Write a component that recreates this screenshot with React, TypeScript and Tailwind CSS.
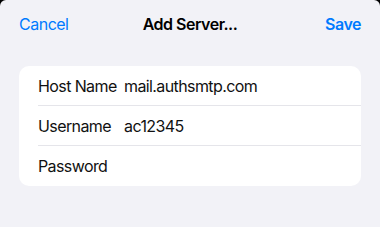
export default function App() {
    const rows = [
        { label: "Host Name", value: "mail.authsmtp.com" },
        { label: "Username", value: "ac12345" },
        { label: "Password", value: "" },
    ];

    return (
        <div className="w-[380px] h-[227px] bg-black font-['Inter',sans-serif]">
            <div className="h-full rounded-t-[6px] bg-[#f2f2f7] px-[19px]">
                <div className="grid grid-cols-[1fr_auto_1fr] items-center h-[47px] text-[16px] tracking-[-0.5px]">
                    <button className="justify-self-start text-[#007aff]">Cancel</button>
                    <span className="font-semibold text-black">Add Server...</span>
                    <button className="justify-self-end text-[#007aff] font-semibold">Save</button>
                </div>
                <div className="mt-[19px] bg-white rounded-[10px] pl-[19px]">
                    {rows.map((row, i) => (
                        <div
                            key={row.label}
                            className={`flex items-center h-[40px] text-[16px] tracking-[-0.6px] text-[#111] ${i < rows.length - 1 ? "border-b border-[#e5e5ea]" : ""}`}
                        >
                            <span className="w-[86px] shrink-0">{row.label}</span>
                            <span>{row.value}</span>
                        </div>
                    ))}
                </div>
            </div>
        </div>
    );
}
